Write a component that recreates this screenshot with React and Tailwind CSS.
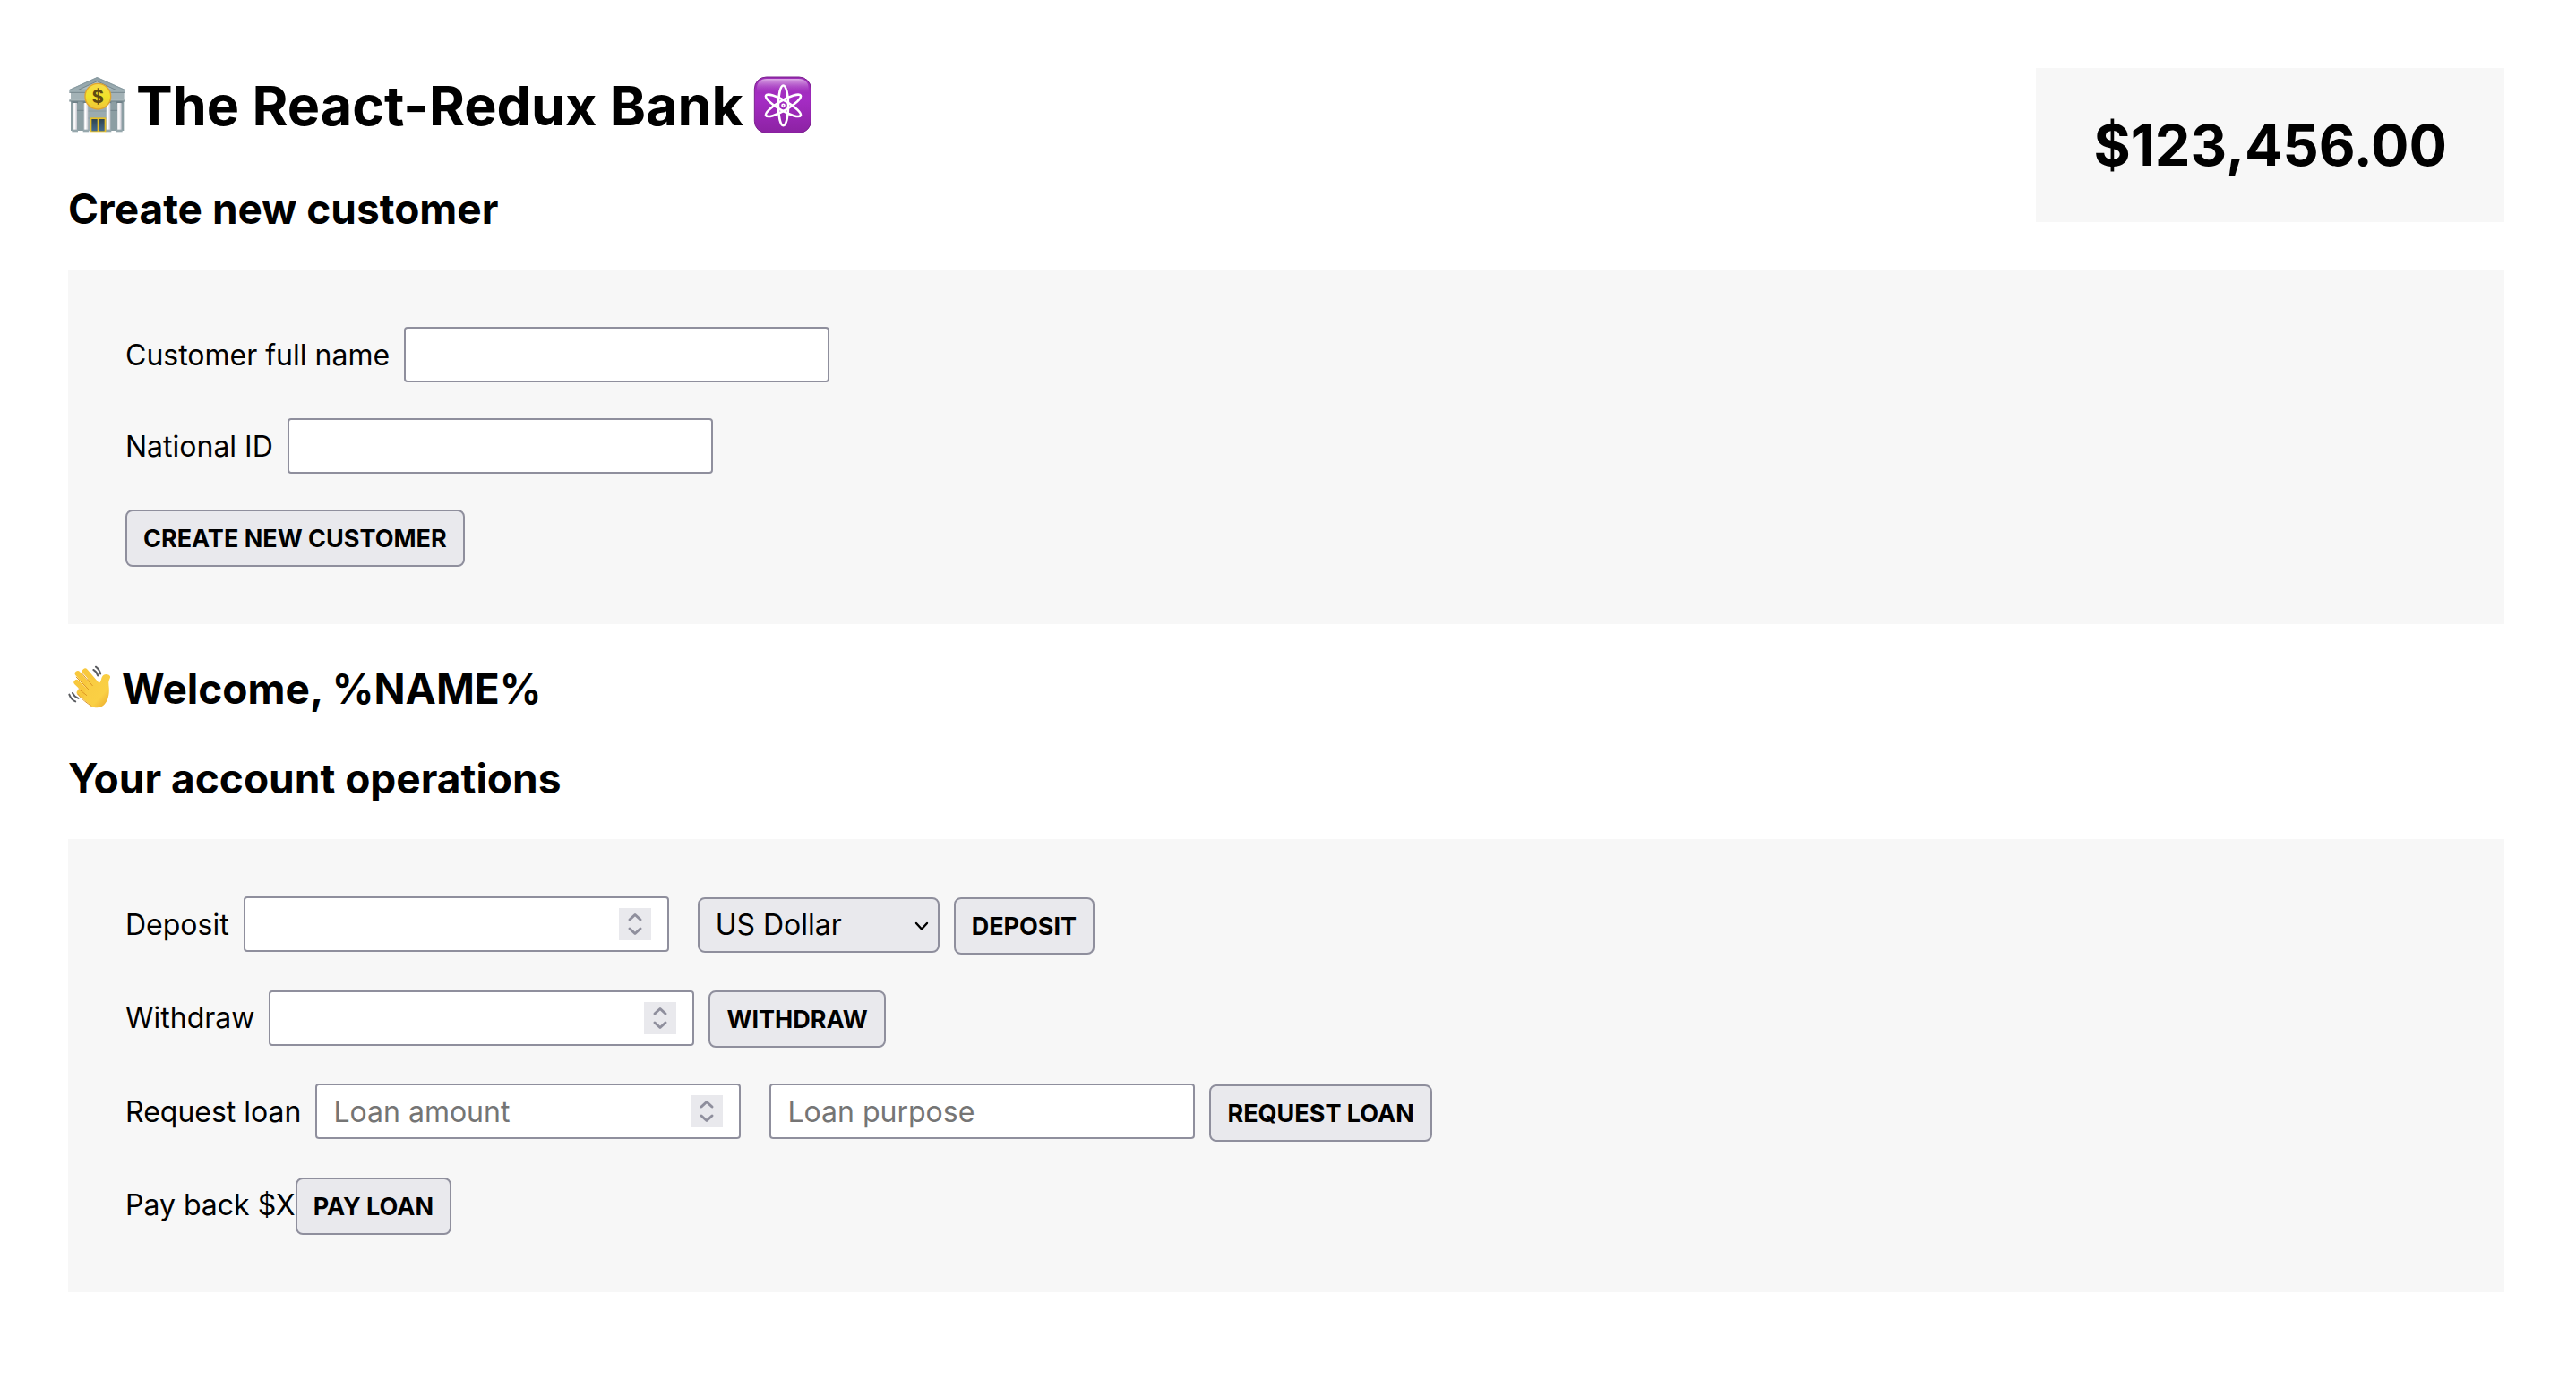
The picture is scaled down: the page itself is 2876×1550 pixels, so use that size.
function BankIcon() {
  return (
    <svg className="size-16 shrink-0 overflow-visible" viewBox="18 25 192 192" role="img" aria-label="Bank">
      <defs>
        <linearGradient id="roof" x1="0" y1="0" x2="0" y2="1">
          <stop offset="0" stopColor="#8fa0a6" />
          <stop offset="1" stopColor="#9fb0b5" />
        </linearGradient>
        <linearGradient id="pillar" x1="0" y1="0" x2="1" y2="0">
          <stop offset="0" stopColor="#d9dadf" />
          <stop offset="0.4" stopColor="#ffffff" />
          <stop offset="1" stopColor="#c6c5ce" />
        </linearGradient>
        <linearGradient id="coin" x1="0" y1="0" x2="0" y2="1">
          <stop offset="0" stopColor="#f7d94a" />
          <stop offset="0.5" stopColor="#f1e22a" />
          <stop offset="1" stopColor="#f0c43a" />
        </linearGradient>
        <linearGradient id="door" x1="0" y1="0" x2="0" y2="1">
          <stop offset="0" stopColor="#2f4450" />
          <stop offset="1" stopColor="#456a8c" />
        </linearGradient>
      </defs>
      <rect x="27" y="74" width="178" height="128" fill="#8c9ea3" />
      <rect x="27" y="74" width="178" height="20" fill="#a3b2b6" />
      <rect x="84" y="104" width="63" height="98" fill="#9babb0" />
      <path d="M84 136h63M84 160h63" stroke="#84969c" strokeWidth="2" />
      <path d="M47 134h25M159 134h25" stroke="#71848b" strokeWidth="3" />
      <rect x="22" y="94" width="187" height="9" fill="#a9b7ba" />
      <path d="M22 103h187" stroke="#6f8087" strokeWidth="3" />
      <path d="M115 22 209 64v9H22v-9z" fill="url(#roof)" />
      <path d="M115 36 177 65H53z" fill="#b0bec1" stroke="#74858b" strokeWidth="3" />
      <path d="M22 66 115 24 209 66" fill="none" stroke="#8799a0" strokeWidth="3" />
      <path d="M22 74h187" stroke="#75868d" strokeWidth="3" />
      <g fill="#6d7f86">
        <rect x="31" y="104" width="20" height="6" />
        <rect x="68" y="104" width="20" height="6" />
        <rect x="143" y="104" width="20" height="6" />
        <rect x="180" y="104" width="20" height="6" />
      </g>
      <g fill="url(#pillar)">
        <rect x="34" y="109" width="14" height="90" />
        <rect x="71" y="109" width="14" height="90" />
        <rect x="146" y="109" width="14" height="90" />
        <rect x="183" y="109" width="14" height="90" />
      </g>
      <g fill="#97a8ad">
        <rect x="31" y="198" width="20" height="8" />
        <rect x="68" y="198" width="20" height="8" />
        <rect x="143" y="198" width="20" height="8" />
        <rect x="180" y="198" width="20" height="8" />
      </g>
      <rect x="92" y="158" width="53" height="48" fill="#e6c02b" />
      <rect x="97" y="163" width="19" height="40" fill="url(#door)" />
      <rect x="121" y="163" width="19" height="40" fill="url(#door)" />
      <circle cx="118" cy="87" r="43" fill="url(#coin)" stroke="#e0a52c" strokeWidth="4" />
      <text x="118" y="109" textAnchor="middle" fontSize="62" fontWeight="700" fill="#5f4a12">$</text>
    </svg>
  );
}

function AtomIcon() {
  return (
    <svg className="size-16 shrink-0 overflow-visible" viewBox="15 21 195 195" role="img" aria-label="Atom">
      <defs>
        <linearGradient id="tile" x1="0" y1="0" x2="0" y2="1">
          <stop offset="0" stopColor="#9c2fb5" />
          <stop offset="0.4" stopColor="#a52cc4" />
          <stop offset="1" stopColor="#8c22a3" />
        </linearGradient>
        <linearGradient id="gloss" x1="0" y1="0" x2="0" y2="1">
          <stop offset="0" stopColor="#e9c3f0" stopOpacity="0.85" />
          <stop offset="1" stopColor="#b04fcb" stopOpacity="0" />
        </linearGradient>
      </defs>
      <rect x="16" y="18" width="192" height="190" rx="40" fill="url(#tile)" stroke="#7b1f8e" strokeWidth="3" />
      <path d="M24 72V58C24 36 36 24 58 24H166C188 24 200 36 200 58V72Z" fill="url(#gloss)" />
      <g fill="none" stroke="#ffffff" strokeWidth="8">
        <ellipse cx="114" cy="115" rx="17" ry="68" />
        <ellipse cx="114" cy="115" rx="17" ry="68" transform="rotate(60 114 115)" />
        <ellipse cx="114" cy="115" rx="17" ry="68" transform="rotate(120 114 115)" />
      </g>
      <circle cx="114" cy="115" r="7" fill="#ffffff" />
      <circle cx="114" cy="115" r="2" fill="#a02bbb" />
    </svg>
  );
}

function WaveIcon() {
  return (
    <svg className="size-12 shrink-0 overflow-visible" viewBox="19 26 146 146" role="img" aria-label="Waving hand">
      <defs>
        <linearGradient id="skin" x1="0.2" y1="0.2" x2="0.9" y2="1">
          <stop offset="0" stopColor="#f9cc42" />
          <stop offset="0.6" stopColor="#fad044" />
          <stop offset="1" stopColor="#eba92c" />
        </linearGradient>
      </defs>
      <g fill="none" stroke="#f8c83d" strokeWidth="19" strokeLinecap="round">
        <path d="M77 40 118 88" />
        <path d="M52 48 102 106" />
        <path d="M48 78 94 122" />
        <path d="M58 112 104 150" />
      </g>
      <path
        d="M86 60 125 79C132 75 131 66 134 60C138 50 148 48 156 52C164 56 163 61 160 66C155 76 157 84 158 96C160 124 152 146 138 157C126 166 110 166 98 158L72 134Z"
        fill="url(#skin)"
      />
      <g fill="none" stroke="#dc9526" strokeWidth="3" strokeLinecap="round">
        <path d="M66 47 102 89" />
        <path d="M47 60 88 101" />
        <path d="M55 100 82 122" />
        <path d="M52 118C64 134 84 149 98 158" />
      </g>
      <g fill="none" stroke="#5a5c60" strokeWidth="6" strokeLinecap="round">
        <path d="M105 35Q117 42 120 55" />
        <path d="M113 25Q126 34 129 49" />
        <path d="M34 114Q40 127 54 132" />
        <path d="M23 119Q30 137 44 143" />
      </g>
    </svg>
  );
}

function Heading({ children }) {
  return <h2 className="flex items-center gap-3 text-[46px] leading-[56px] font-bold">{children}</h2>;
}

function Panel({ children }) {
  return <div className="mt-10 flex flex-col items-start gap-10 bg-[#f7f7f7] p-16">{children}</div>;
}

function Row({ children }) {
  return <div className="flex flex-wrap items-baseline gap-x-4">{children}</div>;
}

function TextField({ id, ...rest }) {
  return (
    <input
      id={id}
      type="text"
      className="h-[62px] w-[475px] rounded-sm border-2 border-[#8f8f9d] bg-white px-[18px] placeholder:text-[#757575]"
      {...rest}
    />
  );
}

function NumberField({ id, ...rest }) {
  return (
    <span className="relative flex items-baseline">
      <input
        id={id}
        type="number"
        className="h-[62px] w-[475px] appearance-none rounded-sm border-2 border-[#8f8f9d] bg-white pr-16 pl-[18px] [appearance:textfield] placeholder:text-[#757575]"
        {...rest}
      />
      <svg className="pointer-events-none absolute top-[13px] right-5 size-9 bg-[#e9e9ed]" viewBox="0 0 36 36" fill="none" stroke="#8f8f9d" strokeWidth="3" strokeLinecap="round" strokeLinejoin="round" aria-hidden="true">
        <path d="M12 13 18 7.5 24 13M12 23 18 28.5 24 23" />
      </svg>
    </span>
  );
}

function Button({ children }) {
  return (
    <button type="button" className="h-16 rounded-lg border-2 border-[#8f8f9d] bg-[#e9e9ed] px-[18px] pt-0.5 text-[27px] font-bold uppercase">
      {children}
    </button>
  );
}

export default function App() {
  return (
    <main className="py-[76px] pr-20 pl-[76px] font-['Inter',sans-serif] text-[32px] leading-[40px] text-black">
      <header className="flex items-start justify-between">
        <div className="flex flex-col gap-11">
          <h1 className="flex items-center gap-3 text-[61px] leading-[85px] font-bold">
            <BankIcon />
            The React-Redux Bank
            <AtomIcon />
          </h1>
          <Heading>Create new customer</Heading>
        </div>
        <div className="bg-[#f7f7f7] px-16 py-12 text-[63px] leading-[76px] font-bold">$123,456.00</div>
      </header>

      <Panel>
        <Row>
          <label htmlFor="full-name">Customer full name</label>
          <TextField id="full-name" />
        </Row>
        <Row>
          <label htmlFor="national-id">National ID</label>
          <TextField id="national-id" />
        </Row>
        <Button>Create new customer</Button>
      </Panel>

      <div className="mt-11 flex flex-col gap-11">
        <Heading>
          <WaveIcon />
          Welcome, %NAME%
        </Heading>
        <Heading>Your account operations</Heading>
      </div>

      <Panel>
        <Row>
          <label htmlFor="deposit">Deposit</label>
          <NumberField id="deposit" />
          <span className="relative ml-4 flex items-baseline">
            <select aria-label="Currency" defaultValue="USD" className="h-[62px] w-[270px] appearance-none rounded-lg border-2 border-[#8f8f9d] bg-[#e9e9ed] px-[18px]">
              <option value="USD">US Dollar</option>
              <option value="EUR">Euro</option>
              <option value="GBP">British Pound</option>
            </select>
            <svg className="pointer-events-none absolute top-6 right-3 h-4 w-4" viewBox="0 0 16 16" fill="none" stroke="#000000" strokeWidth="2.4" strokeLinecap="round" strokeLinejoin="round" aria-hidden="true">
              <path d="M2 5 8 11.5 14 5" />
            </svg>
          </span>
          <Button>Deposit</Button>
        </Row>
        <Row>
          <label htmlFor="withdraw">Withdraw</label>
          <NumberField id="withdraw" />
          <Button>Withdraw</Button>
        </Row>
        <Row>
          <label htmlFor="loan-amount">Request loan</label>
          <NumberField id="loan-amount" placeholder="Loan amount" />
          <span className="ml-4 flex items-baseline">
            <TextField id="loan-purpose" aria-label="Loan purpose" placeholder="Loan purpose" />
          </span>
          <Button>Request loan</Button>
        </Row>
        <div className="flex items-baseline">
          <span>Pay back $X</span>
          <Button>Pay loan</Button>
        </div>
      </Panel>
    </main>
  );
}
